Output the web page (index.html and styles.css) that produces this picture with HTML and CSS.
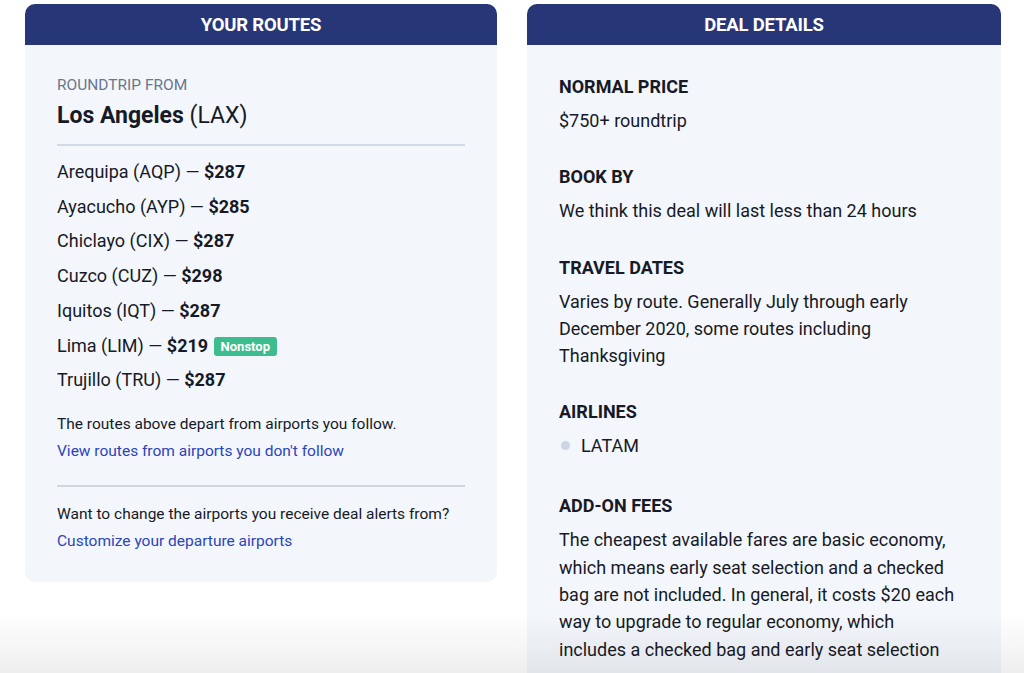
FILE: index.html
```html
<!DOCTYPE html>
<html>
<head>
<meta charset="utf-8">
<link rel="stylesheet" href="styles.css">
</head>
<body>
<div class="page">
  <section class="card card-left">
    <header class="card-head">YOUR ROUTES</header>
    <div class="card-body">
      <div class="from-label">ROUNDTRIP FROM</div>
      <div class="from-city"><b>Los Angeles</b> (LAX)</div>
      <hr class="rule rule-blue">
      <ul class="routes">
        <li>Arequipa (AQP) — <b>$287</b></li>
        <li>Ayacucho (AYP) — <b>$285</b></li>
        <li>Chiclayo (CIX) — <b>$287</b></li>
        <li>Cuzco (CUZ) — <b>$298</b></li>
        <li>Iquitos (IQT) — <b>$287</b></li>
        <li>Lima (LIM) — <b>$219</b> <span class="badge">Nonstop</span></li>
        <li>Trujillo (TRU) — <b>$287</b></li>
      </ul>
      <p class="note">The routes above depart from airports you follow.</p>
      <a class="link" href="#">View routes from airports you don't follow</a>
      <hr class="rule rule-grey">
      <p class="note">Want to change the airports you receive deal alerts from?</p>
      <a class="link" href="#">Customize your departure airports</a>
    </div>
  </section>
  <section class="card card-right">
    <header class="card-head">DEAL DETAILS</header>
    <div class="card-body details">
      <div class="item">
        <h3>NORMAL PRICE</h3>
        <p>$750+ roundtrip</p>
      </div>
      <div class="item">
        <h3>BOOK BY</h3>
        <p>We think this deal will last less than 24 hours</p>
      </div>
      <div class="item">
        <h3>TRAVEL DATES</h3>
        <p>Varies by route. Generally July through early December 2020, some routes including Thanksgiving</p>
      </div>
      <div class="item">
        <h3>AIRLINES</h3>
        <ul class="airlines"><li>LATAM</li></ul>
      </div>
      <div class="item">
        <h3>ADD-ON FEES</h3>
        <p>The cheapest available fares are basic economy, which means early seat selection and a checked bag are not included. In general, it costs $20 each way to upgrade to regular economy, which includes a checked bag and early seat selection</p>
      </div>
    </div>
  </section>
</div>
<div class="fade"></div>
</body>
</html>
```

FILE: styles.css
```css
html, body {
  margin: 0;
  padding: 0;
  background: #ffffff;
  font-family: Roboto, "Liberation Sans", Arial, sans-serif;
  color: #171a26;
  overflow: hidden;
  height: 673px;
}
.page {
  display: flex;
  align-items: flex-start;
  gap: 30px;
  padding: 4px 23px 0 25px;
}
.card {
  background: #f3f6fb;
  border-radius: 10px;
  overflow: hidden;
}
.card-left { width: 472px; }
.card-right { width: 474px; min-height: 800px; }
.card-head {
  background: #273677;
  color: #ffffff;
  font-weight: 700;
  font-size: 18.5px;
  height: 41px;
  line-height: 42px;
  text-align: center;
  letter-spacing: -0.2px;
}
.card-body {
  padding: 30px 32px 27px 32px;
}
.from-label {
  font-size: 15.5px;
  color: #6a778c;
  line-height: 20px;
}
.from-city {
  font-size: 23px;
  line-height: 30px;
  margin-top: 6px;
}
.from-city b { font-weight: 700; }
.rule {
  border: 0;
  height: 2px;
  margin: 0;
}
.rule-blue {
  background: #cfdbe8;
  margin-top: 13px;
  margin-bottom: 9px;
}
.rule-grey {
  background: #d3d7e0;
  margin-top: 20px;
  margin-bottom: 14px;
}
.routes {
  list-style: none;
  margin: 0;
  padding: 0;
}
.routes li {
  font-size: 18px;
  line-height: 34.7px;
}
.routes b { font-weight: 700; }
.badge {
  display: inline-block;
  background: #3dbd8d;
  color: #ffffff;
  font-size: 13px;
  font-weight: 700;
  line-height: 19px;
  padding: 0 7px;
  border-radius: 3px;
  vertical-align: 1px;
  margin-left: 1px;
}
.note {
  font-size: 15.5px;
  line-height: 27px;
  margin: 0;
}
.routes + .note { margin-top: 13px; }
.link {
  display: block;
  font-size: 15.5px;
  line-height: 27px;
  color: #2b44bd;
  text-decoration: none;
}
.details { padding: 30px 40px 30px 32px; }
.item { margin-bottom: 31px; }
.item h3 {
  font-size: 18px;
  font-weight: 700;
  line-height: 24px;
  margin: 0 0 8px 0;
  color: #171a26;
}
.item p {
  font-size: 18px;
  line-height: 27.3px;
  margin: 0;
}
.airlines {
  list-style: none;
  margin: 0;
  padding: 0 0 4px 0;
}
.airlines li {
  font-size: 18px;
  line-height: 27px;
  display: flex;
  align-items: center;
  gap: 11px;
}
.airlines li::before {
  content: "";
  width: 9px;
  height: 9px;
  border-radius: 50%;
  background: #cdd6e4;
  margin-left: 2px;
}
.fade {
  position: fixed;
  left: 0;
  right: 0;
  bottom: 0;
  height: 60px;
  background: linear-gradient(to bottom, #ffffff 0%, #eeeeee 100%);
  mix-blend-mode: multiply;
  pointer-events: none;
}
```
